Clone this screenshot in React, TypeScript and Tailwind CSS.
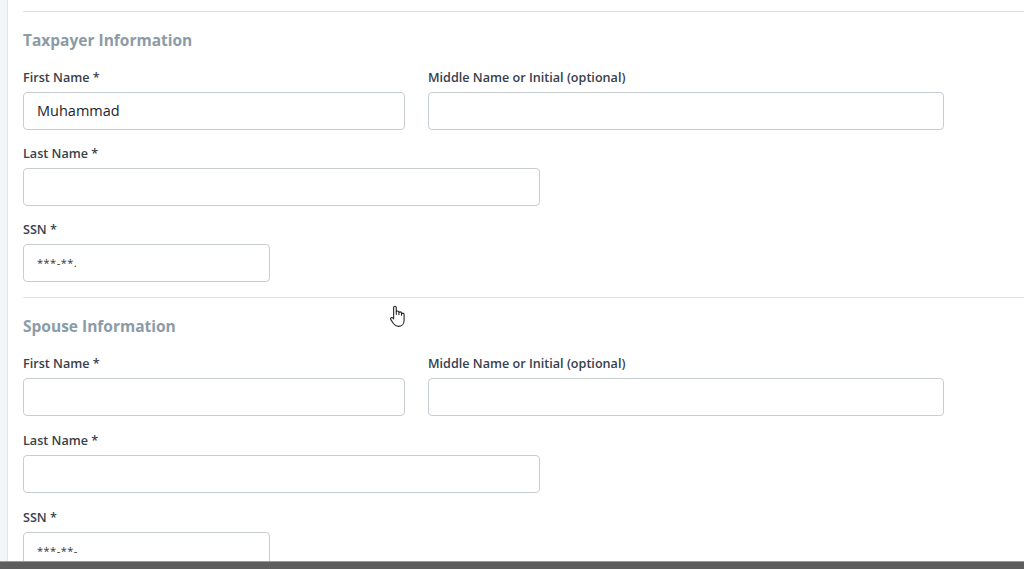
const FONT = { fontFamily: '"Open Sans", "Noto Sans", sans-serif' };

function Field({
  label,
  width,
  value,
  small,
}: {
  label: string;
  width: string;
  value?: string;
  small?: boolean;
}) {
  return (
    <div className={`flex flex-col gap-[5px] ${width}`}>
      <label className="text-[12.6px] leading-[19px] font-semibold text-[#36414b]">{label}</label>
      <div className="h-[38px] rounded-[4px] border border-[#c8cdd2] bg-white flex items-center px-[13px]">
        {value && (
          <span
            className={
              small
                ? "text-[11px] tracking-[0.5px] text-[#333]"
                : "text-[14.5px] text-[#1f2328]"
            }
          >
            {value}
          </span>
        )}
      </div>
    </div>
  );
}

function PersonSection({
  title,
  first,
  ssn,
  rowGap,
}: {
  title: string;
  first?: string;
  ssn: string;
  rowGap: string;
}) {
  return (
    <section className="border-t border-[#dfe2e5] pt-[18px] pb-[15px]">
      <h2 className="text-[15.5px] leading-[20px] font-bold text-[#8b9ba7] mb-[18px]">{title}</h2>
      <div className={`flex flex-col ${rowGap}`}>
        <div className="flex gap-[23px]">
          <Field label="First Name *" width="w-[382px]" value={first} />
          <Field label="Middle Name or Initial (optional)" width="w-[516px]" />
        </div>
        <Field label="Last Name *" width="w-[517px]" />
        <Field label="SSN *" width="w-[247px]" value={ssn} small />
      </div>
    </section>
  );
}

function HandCursor() {
  return (
    <svg width="20" height="24" viewBox="0 0 18 22" className="absolute left-[388px] top-[304px]">
      <path
        d="M5 11V3.2a1.2 1.2 0 0 1 2.4 0V9.5V7.6a1.2 1.2 0 0 1 2.4 0v2V8.4a1.2 1.2 0 0 1 2.4 0v1.8V9.6a1.2 1.2 0 0 1 2.4 0v5.2c0 3.4-2.2 5.7-5.2 5.7-2.2 0-3.3-.8-4.6-2.6L2.3 14.1a1.2 1.2 0 0 1 1.9-1.4L5 13.6Z"
        fill="#fff"
        stroke="#222"
        strokeWidth="1"
        strokeLinejoin="round"
      />
    </svg>
  );
}

export default function App() {
  return (
    <div className="relative h-[569px] w-[1024px] overflow-hidden bg-white flex" style={FONT}>
      <div className="w-[8px] shrink-0 bg-[#f3f5f7] border-r border-[#e3e6e9]" />
      <main className="flex-1 pl-[15px] pt-[11px]">
        <PersonSection title="Taxpayer Information" first="Muhammad" ssn="***-**." rowGap="gap-[14px]" />
        <PersonSection title="Spouse Information" ssn="***-**-" rowGap="gap-[15px]" />
      </main>
      <HandCursor />
      <div className="absolute bottom-0 left-0 right-0 h-[8px] bg-[#5e5e5e] border-t border-[#9a9a9a]" />
    </div>
  );
}
